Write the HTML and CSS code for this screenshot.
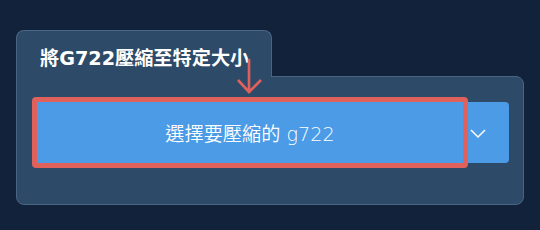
FILE: index.html
```html
<!DOCTYPE html>
<html lang="zh-Hant">
<head>
  <meta charset="UTF-8">
  <meta name="viewport" content="width=device-width, initial-scale=1.0">
  <title>將G722壓縮至特定大小</title>
  <link rel="stylesheet" href="styles.css">
</head>
<body>
  <div class="card">
    <div class="card-tab">
      <h2 class="card-title">將G722壓縮至特定大小</h2>
    </div>
    <div class="card-body">
      <!-- pointer arrow -->
      <svg class="pointer" width="28" height="36" viewBox="0 0 28 36">
        <path d="M13 0 V33 M2 21 L13 33 L25 21" fill="none" stroke="#e0605b" stroke-width="2.6"/>
      </svg>

      <div class="btn-group">
        <button class="btn-main">選擇要壓縮的 g722</button>
        <button class="btn-split">
          <svg width="16" height="10" viewBox="0 0 16 10">
            <path d="M1 1 L8 8 L15 1" fill="none" stroke="#fff" stroke-width="1.5"/>
          </svg>
        </button>
      </div>
    </div>
  </div>
</body>
</html>
```

FILE: styles.css
```css
body {
  margin: 0;
  padding: 30px 16px 0;
  background-color: #11223a;
  font-family: "DejaVu Sans", "Noto Sans CJK TC", sans-serif;
}

.card {
  width: 508px;
}

/* Tab */
.card-tab {
  position: relative;
  z-index: 1;
  width: 256px;
  height: 47px;
  margin-bottom: -1px;
  background-color: #2d4a69;
  border: 1px solid #4a6583;
  border-bottom: none;
  border-radius: 8px 8px 0 0;
  box-sizing: border-box;
  padding: 0 0 0 23px;
  display: flex;
  align-items: center;
}
.card-title {
  margin: 0;
  padding-top: 6px;
  font-size: 1.2rem;
  font-weight: 700;
  color: #fff;
}

/* Body */
.card-body {
  position: relative;
  background-color: #2d4a69;
  border: 1px solid #4a6583;
  border-radius: 0 8px 8px 8px;
  padding: 25px 14px 41px 20px;
}

.pointer {
  position: absolute;
  left: 219px;
  top: -18px;
  z-index: 3;
}

/* Buttons */
.btn-group {
  display: flex;
  height: 61px;
}
.btn-main {
  position: relative;
  flex: 1;
  border: none;
  margin: 0;
  background-color: #4b9be6;
  color: #fff;
  font-family: inherit;
  font-size: 1.2rem;
  font-weight: 350;
  padding: 0;
}
.btn-main::after {
  content: "";
  position: absolute;
  top: -5px;
  left: -5px;
  right: -5px;
  bottom: -5px;
  border: 5px solid #e0605b;
  border-radius: 4px;
  z-index: 2;
}
.btn-split {
  width: 46px;
  border: none;
  margin: 0;
  padding: 2px 0 0 7px;
  background-color: #4b9be6;
  border-radius: 0 4px 4px 0;
  text-align: left;
}
.btn-split svg {
  display: block;
}
```
